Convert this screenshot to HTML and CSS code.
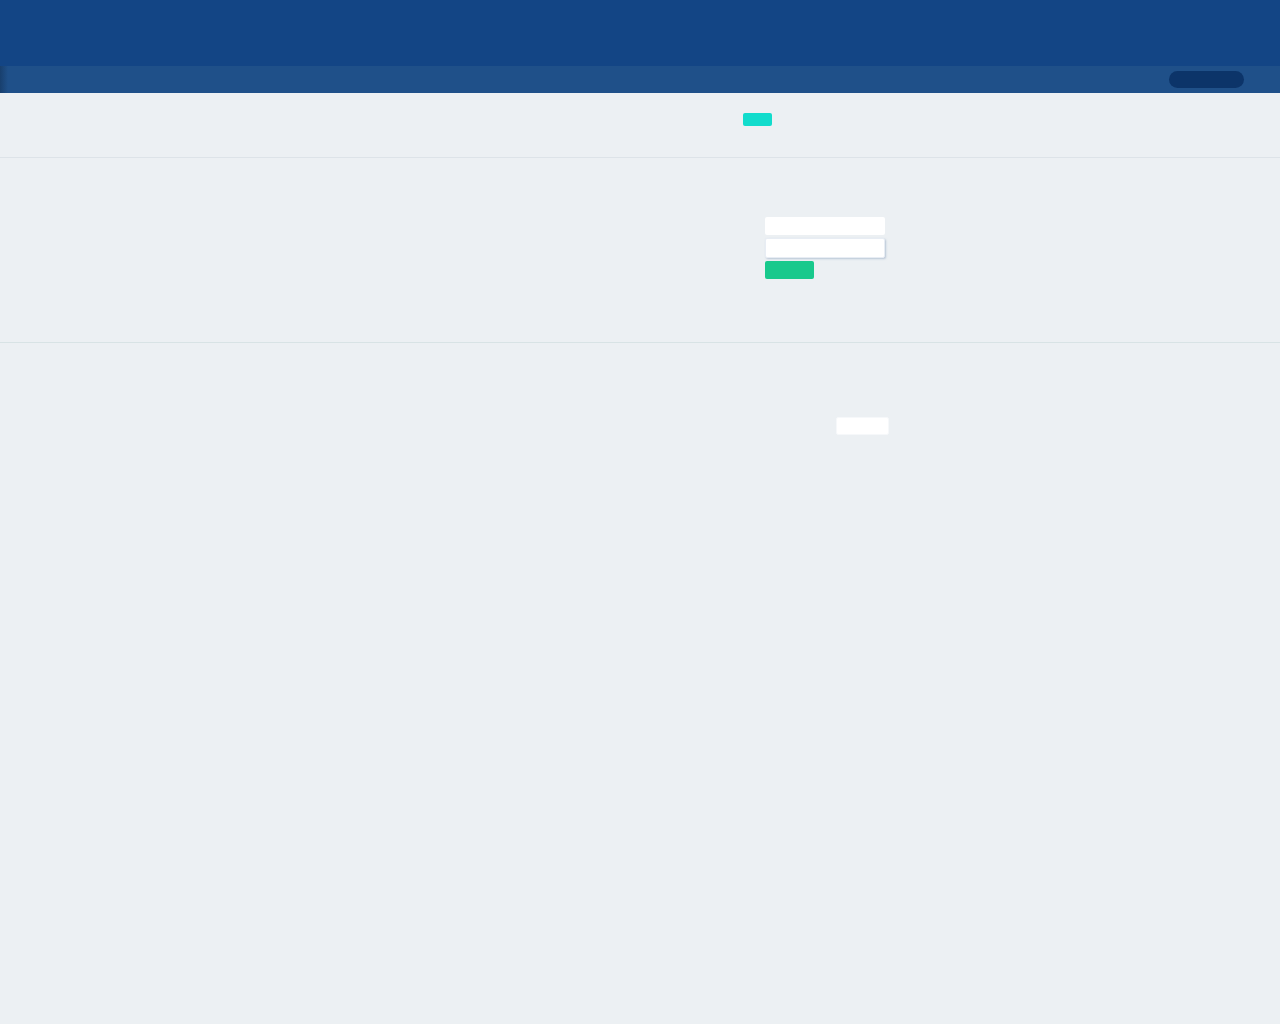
FILE: index.html
```html
<!DOCTYPE html>
<html lang="en">
<head>
<meta charset="utf-8">
<title>Page</title>
<link rel="stylesheet" href="styles.css">
</head>
<body>
  <header class="topbar"></header>
  <nav class="subnav">
    <div class="subnav-edge"></div>
    <div class="subnav-pill"></div>
  </nav>
  <section class="band band-top">
    <button class="btn-teal" type="button"></button>
  </section>
  <section class="band band-form">
    <form class="login">
      <input class="field" type="text">
      <input class="field field-focus" type="password">
      <button class="btn-green" type="button"></button>
    </form>
  </section>
  <section class="band band-bottom">
    <div class="white-box"></div>
  </section>
</body>
</html>
```
FILE: styles.css
```css
* { box-sizing: border-box; }
html, body {
  margin: 0;
  padding: 0;
  background: #ecf0f3;
  font-family: "Liberation Sans", Arial, sans-serif;
  height: 100%;
}
.topbar {
  height: 66px;
  background: #134585;
}
.subnav {
  height: 27px;
  background: #1f5089;
  display: flex;
  align-items: flex-start;
  justify-content: space-between;
}
.subnav-edge {
  width: 8px;
  height: 27px;
  background: linear-gradient(to right, #183f6d, rgba(31,80,137,0));
}
.subnav-pill {
  width: 75px;
  height: 17px;
  margin-top: 5px;
  margin-right: 36px;
  border-radius: 9px;
  background: #0c3469;
}
.band {
  border-bottom: 1px solid #dde3e8;
}
.band-top {
  height: 65px;
  padding: 20px 0 0 743px;
}
.btn-teal {
  display: block;
  width: 29px;
  height: 13px;
  border: 0;
  padding: 0;
  border-radius: 2px;
  background: #12dccc;
}
.band-form {
  height: 185px;
  padding: 59px 0 0 765px;
  border-bottom-color: #d8e3e5;
}
.login {
  display: flex;
  flex-direction: column;
  align-items: flex-start;
  gap: 3px;
  margin: 0;
}
.field {
  display: block;
  width: 120px;
  height: 18px;
  border: 0;
  border-radius: 2px;
  background: #ffffff;
  padding: 0;
  outline: none;
}
.field-focus {
  height: 20px;
  border: 1px solid #e8edf4;
  box-shadow: 1px 1px 2px rgba(150,170,195,0.6);
}
.btn-green {
  display: block;
  width: 49px;
  height: 18px;
  border: 0;
  padding: 0;
  border-radius: 2px;
  background: #18c98c;
}
.band-bottom {
  border-bottom: 0;
  padding: 74px 0 0 836px;
}
.white-box {
  width: 53px;
  height: 18px;
  border-radius: 2px;
  background: #ffffff;
  border: 1px solid #f6f8fa;
}
```
